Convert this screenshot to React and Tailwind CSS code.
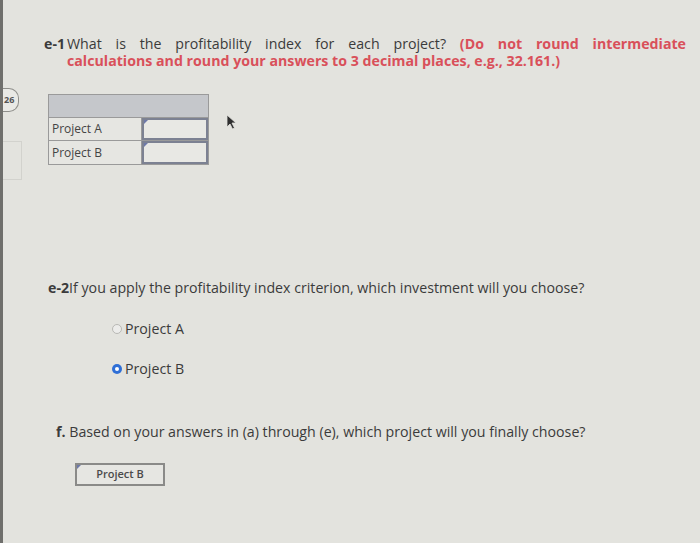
import React from 'react';

const font = { fontFamily: '"Open Sans", "Liberation Sans", sans-serif' };

const App = () => {
  return (
    <div className="relative w-[700px] h-[543px] overflow-hidden bg-[#e3e3de] text-[#3b3b3b] border-l-[3px] border-[#6f6f6c]" style={font}>
      {/* left gutter bits */}
      <div className="absolute left-0 top-[88px] w-[16px] h-[24px] rounded-r-[10px] border border-l-0 border-[#8e8e8a] bg-[#e9e9e5] flex items-center justify-start pl-[1px] text-[9px] font-bold text-[#555]">26</div>
      <div className="absolute left-0 top-[141px] w-[19px] h-[39px] border border-l-0 border-[#d2d2cd]"></div>

      <div className="pt-[35px] pl-[41px] pr-[14px]">
        <div className="flex text-[14.2px] leading-[17px]">
          <span className="font-bold w-[23px] shrink-0">e-1</span>
          <div className="flex-1 min-w-0">
            <div className="text-justify [text-align-last:justify]">
              What is the profitability index for each project? <span className="font-bold text-[#d9505a]">(Do not round intermediate</span>
            </div>
            <div className="font-bold text-[#d9505a]">calculations and round your answers to 3 decimal places, e.g., 32.161.)</div>
          </div>
        </div>

        <div className="mt-[25px] ml-[4px] flex">
          <table className="border-collapse text-[12px] text-[#444]">
            <tbody>
              <tr>
                <td colSpan={2} className="h-[23px] bg-[#c5c7cb] border border-[#9a9a9a]"></td>
              </tr>
              <tr>
                <td className="w-[93px] h-[23px] border border-[#9a9a9a] bg-[#e6e6e2] pl-[3px]">Project A</td>
                <td className="w-[67px] border border-[#9a9a9a] p-0">
                  <div className="relative h-[22px] border-2 border-[#7c8192] bg-[#e8e8e4]">
                    <span className="absolute left-0 top-0 w-0 h-0 border-t-[4px] border-r-[4px] border-t-[#6e79a8] border-r-transparent"></span>
                  </div>
                </td>
              </tr>
              <tr>
                <td className="h-[24px] border border-[#9a9a9a] bg-[#e6e6e2] pl-[3px]">Project B</td>
                <td className="border border-[#9a9a9a] p-0">
                  <div className="relative h-[23px] border-2 border-[#7c8192] bg-[#e8e8e4]">
                    <span className="absolute left-0 top-0 w-0 h-0 border-t-[4px] border-r-[4px] border-t-[#6e79a8] border-r-transparent"></span>
                  </div>
                </td>
              </tr>
            </tbody>
          </table>
          <svg className="ml-[17px] mt-[20px]" width="12" height="16" viewBox="0 0 12 16">
            <path d="M1 1 L1 13 L4 10 L6.5 15 L8.5 14 L6 9 L10 9 Z" fill="#2f2f2f" stroke="#e3e3de" strokeWidth="0.8" />
          </svg>
        </div>

        <div className="mt-[114px] ml-[4px] text-[14.2px] leading-[18px]">
          <span className="font-bold">e-2</span>If you apply the profitability index criterion, which investment will you choose?
        </div>

        <div className="mt-[23px] ml-[68px] flex flex-col gap-[22px] text-[14.2px] leading-[18px]">
          <label className="flex items-center gap-[3px]">
            <span className="w-[10px] h-[10px] rounded-full border border-[#b8b8b4] bg-[#ececea]"></span>
            <span>Project A</span>
          </label>
          <label className="flex items-center gap-[3px]">
            <span className="w-[10px] h-[10px] rounded-full bg-[#2f6fd6] flex items-center justify-center">
              <span className="w-[4px] h-[4px] rounded-full bg-white"></span>
            </span>
            <span>Project B</span>
          </label>
        </div>

        <div className="mt-[45px] ml-[12px] text-[14.2px] leading-[18px]">
          <span className="font-bold">f.</span> Based on your answers in (a) through (e), which project will you finally choose?
        </div>

        <div className="mt-[22px] ml-[31px] relative w-[90px] h-[23px] border-2 border-[#8a8a88] bg-[#e6e6e2] flex items-center justify-center text-[11px] font-semibold text-[#4a4a4a]">
          <span className="absolute left-0 top-0 w-0 h-0 border-t-[4px] border-r-[4px] border-t-[#6e79a8] border-r-transparent"></span>
          Project B
        </div>
      </div>
    </div>
  );
};

export default App;
